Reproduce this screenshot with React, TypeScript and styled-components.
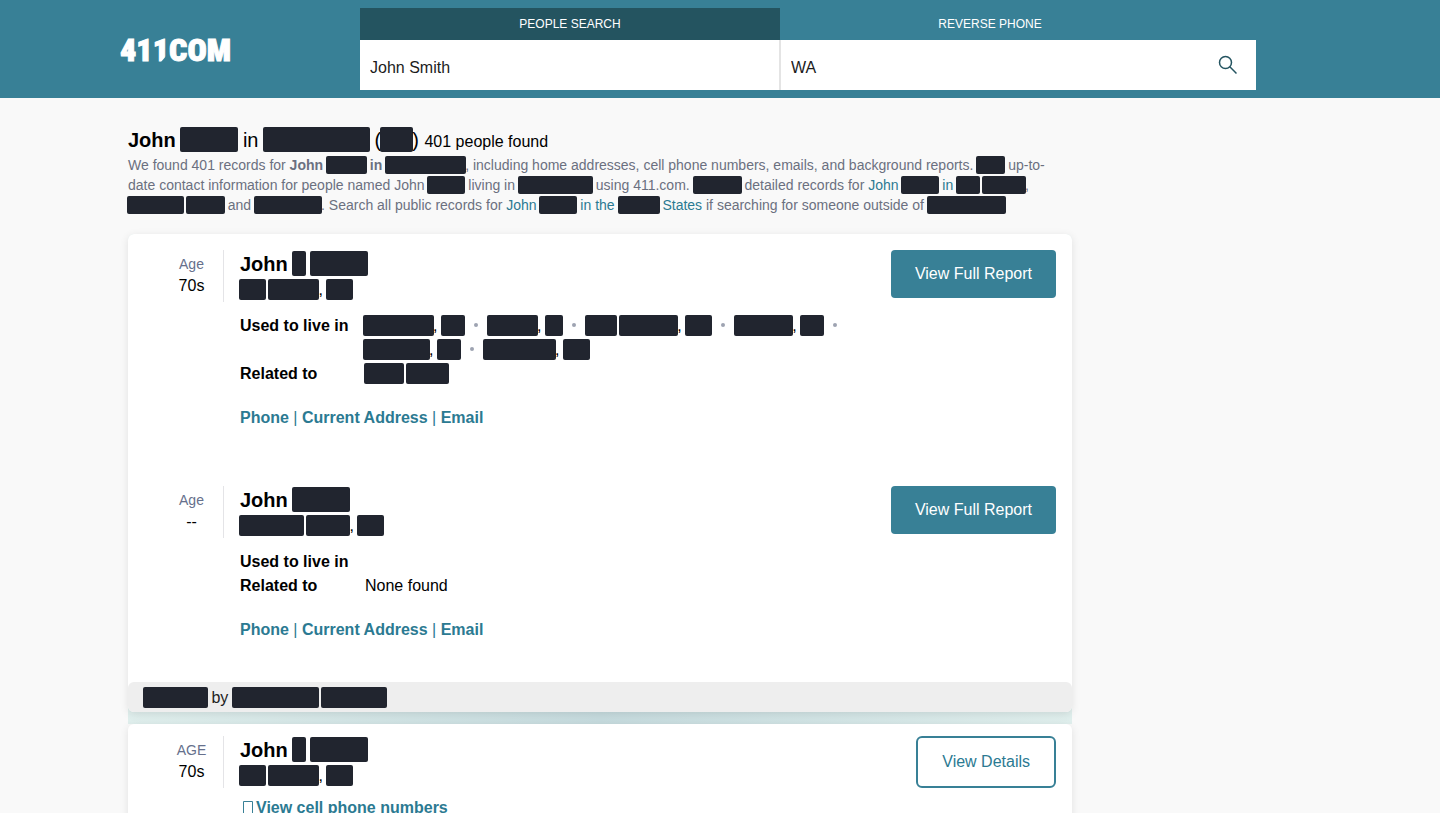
import React from "react";
import styled, { createGlobalStyle } from "styled-components";

const teal = "#388096";
const tealDark = "#245460";
const tealText = "#2b7a92";
const ink = "#21252f";

const GlobalStyle = createGlobalStyle`
  *, *::before, *::after { box-sizing: border-box; }
  body {
    margin: 0;
    background: #f9f9f9;
    color: #000;
    font-family: "Liberation Sans", Helvetica, Arial, sans-serif;
    font-size: 16px;
    line-height: 24px;
  }
  h1, h2, p, dl, dd { margin: 0; }
  button, input { font: inherit; }
`;

const Header = styled.header`
  background: ${teal};
  padding: 8px 24px;
`;

const HeaderInner = styled.div`
  display: flex;
  max-width: 1200px;
  margin: 0 auto;
`;

const LogoLink = styled.a`
  display: flex;
  align-items: center;
  flex: 0 0 240px;
  color: #fff;
  text-decoration: none;
`;

const Search = styled.div`
  flex: 0 1 896px;
  min-width: 0;
`;

const Tabs = styled.nav`
  display: flex;
  padding-right: 56px;
`;

const Tab = styled.button<{ $active?: boolean }>`
  flex: 1;
  height: 32px;
  padding: 0;
  border: 0;
  background: ${(p) => (p.$active ? tealDark : "transparent")};
  color: #fff;
  font-size: 12px;
  text-transform: uppercase;
`;

const SearchForm = styled.form`
  display: flex;
  height: 50px;
  background: #fff;
`;

const Field = styled.input<{ $divided?: boolean }>`
  flex: 1;
  min-width: 0;
  padding: 6px 10px 0;
  border: 0;
  border-left: ${(p) => (p.$divided ? "2px solid #e4e4e4" : "0")};
  border-radius: 0;
  outline: 0;
  background: transparent;
  color: #1c1c1c;
`;

const SearchButton = styled.button`
  flex: 0 0 56px;
  padding: 0;
  border: 0;
  background: transparent;
  line-height: 0;
`;

const Main = styled.main`
  max-width: 1200px;
  margin: 0 auto;
  padding: 29px 8px 0;
`;

const Column = styled.div`
  max-width: 944px;
`;

const Title = styled.h1`
  font-size: 20px;
  line-height: 27px;
  font-weight: 400;

  small {
    font-size: 16px;
  }
`;

const Summary = styled.p`
  max-width: 928px;
  margin-bottom: 19px;
  color: #6b7080;
  font-size: 14px;
  line-height: 20px;

  a {
    color: ${tealText};
    text-decoration: none;
  }
`;

const barSizes = {
  small: { height: 18, drop: 4 },
  medium: { height: 21, drop: 5 },
  large: { height: 25, drop: 5 },
};

const Bar = styled.span<{ $w: number; $size?: keyof typeof barSizes }>`
  display: inline-block;
  width: ${(p) => p.$w}px;
  height: ${(p) => barSizes[p.$size ?? "medium"].height}px;
  margin: 0 -1px;
  border-radius: 2px;
  background: ${ink};
  vertical-align: -${(p) => barSizes[p.$size ?? "medium"].drop}px;
`;

const Featured = styled.div`
  background: linear-gradient(90deg, #e0efed, #c6dbde 50%, #e0efed);
  padding-bottom: 12px;
  border-radius: 6px 6px 0 0;
`;

const Card = styled.section`
  border-radius: 6px;
  background: #fff;
  box-shadow: 0 2px 8px rgba(0, 0, 0, 0.1);
`;

const Person = styled.article<{ $compact?: boolean }>`
  display: grid;
  grid-template-columns: 80px minmax(0, 1fr) auto;
  align-items: start;
  padding: ${(p) => (p.$compact ? "12px 16px 16px" : "16px 16px 40px")};
`;

const Age = styled.div`
  height: 52px;
  padding: 4px 0 0 16px;
  border-right: 1px solid #e4e4e7;
  text-align: center;

  small {
    display: block;
    color: #66708c;
    font-size: 14px;
    line-height: 20px;
  }
`;

const Details = styled.div`
  padding: 0 16px;
`;

const Name = styled.h2`
  font-size: 20px;
  line-height: 28px;
`;

const Facts = styled.dl`
  display: grid;
  grid-template-columns: 124px minmax(0, 1fr);
  margin: 12px 0 20px;

  dt {
    font-weight: 700;
  }
`;

const Related = styled.dd`
  padding-left: 1px;
`;

const Place = styled.span`
  display: inline-block;
  white-space: nowrap;
`;

const Dot = styled.i`
  display: inline-block;
  width: 4px;
  height: 4px;
  margin: 0 10px;
  border-radius: 50%;
  background: #9ea3b1;
  vertical-align: 4px;
`;

const Links = styled.p`
  color: ${tealText};

  a {
    color: inherit;
    font-weight: 700;
    text-decoration: none;
  }
`;

const CellLink = styled.p`
  margin-top: 8px;

  a {
    color: ${tealText};
    font-weight: 700;
    text-decoration: none;
  }

  svg {
    margin: 0 3px;
    vertical-align: -2px;
  }
`;

const Action = styled.button<{ $outline?: boolean }>`
  height: ${(p) => (p.$outline ? 52 : 48)}px;
  padding: 0 24px;
  border: ${(p) => (p.$outline ? `2px solid ${teal}` : "0")};
  border-radius: ${(p) => (p.$outline ? 6 : 4)}px;
  background: ${(p) => (p.$outline ? "#fff" : teal)};
  color: ${(p) => (p.$outline ? tealText : "#fff")};
  white-space: nowrap;
`;

const Sponsor = styled.footer`
  padding: 4px 16px 2px;
  border-radius: 6px;
  background: #eee;
  color: #222;
`;

function Logo() {
  return (
    <svg width="120" height="40" viewBox="0 0 120 40" role="img" aria-label="411.com">
      <text
        x="0"
        y="32"
        fill="#fff"
        stroke="#fff"
        strokeWidth="1"
        fontFamily="'Roboto Condensed', Roboto, 'Liberation Sans', sans-serif"
        fontWeight="900"
        fontSize="32"
      >
        411COM
      </text>
      {/* notch that makes the last 1 and the C read as a speech bubble */}
      <path fill={teal} d="M41 33l6-7v7z" />
    </svg>
  );
}

function SearchIcon() {
  return (
    <svg width="20" height="20" viewBox="0 0 20 20" fill="none" stroke={tealDark} strokeWidth="1.5">
      <circle cx="7.5" cy="7.5" r="6" />
      <path d="M11.8 11.8 18.5 18.5" />
    </svg>
  );
}

const formerPlaces = [
  [[71], 24],
  [[51], 18],
  [[32, 59], 27],
  [[59], 24],
  [[67], 24],
  [[73], 27],
] as [number[], number][];

function Bars({ widths, size }: { widths: number[]; size?: keyof typeof barSizes }) {
  return (
    <>
      {widths.map((w, i) => (
        <React.Fragment key={i}>
          {i > 0 && " "}
          <Bar $w={w} $size={size} />
        </React.Fragment>
      ))}
    </>
  );
}

function PlaceBars({ city, state }: { city: number[]; state: number }) {
  return (
    <Place>
      <Bars widths={city} />, <Bar $w={state} />
    </Place>
  );
}

function PersonHead({ name, city, state }: { name: number[]; city: number[]; state: number }) {
  return (
    <>
      <Name>
        John <Bars widths={name} size="large" />
      </Name>
      <p>
        <PlaceBars city={city} state={state} />
      </p>
    </>
  );
}

function DataLinks() {
  return (
    <Links>
      <a href="#phone">Phone</a> | <a href="#address">Current Address</a> | <a href="#email">Email</a>
    </Links>
  );
}

export default function App() {
  return (
    <>
      <GlobalStyle />
      <Header>
        <HeaderInner>
          <LogoLink href="#home">
            <Logo />
          </LogoLink>
          <Search>
            <Tabs>
              <Tab type="button" $active>People Search</Tab>
              <Tab type="button">Reverse Phone</Tab>
            </Tabs>
            <SearchForm onSubmit={(e) => e.preventDefault()}>
              <Field aria-label="Name" defaultValue="John Smith" />
              <Field aria-label="City or state" defaultValue="WA" $divided />
              <SearchButton type="submit" aria-label="Search">
                <SearchIcon />
              </SearchButton>
            </SearchForm>
          </Search>
        </HeaderInner>
      </Header>
      <Main>
        <Column>
          <Title>
            <b>John</b> <Bar $w={58} $size="large" /> in <Bar $w={107} $size="large" /> (
            <Bar $w={33} $size="large" />) <small>401 people found</small>
          </Title>
          <Summary>
            We found 401 records for <b>John <Bar $w={41} $size="small" /> in <Bar $w={81} $size="small" /></b>,
            including home addresses, cell phone numbers, emails, and background reports.{" "}
            <Bar $w={29} $size="small" /> up-to-date contact information for people named John{" "}
            <Bar $w={38} $size="small" /> living in <Bar $w={75} $size="small" /> using 411.com.{" "}
            <Bar $w={49} $size="small" /> detailed records for{" "}
            <a href="#state">John <Bar $w={38} $size="small" /> in <Bars widths={[24, 44]} size="small" /></a>,{" "}
            <Bars widths={[57, 39]} size="small" /> and <Bar $w={68} $size="small" />. Search all public records for{" "}
            <a href="#country">John <Bar $w={38} $size="small" /> in the <Bar $w={42} $size="small" /> States</a> if
            searching for someone outside of <Bar $w={79} $size="small" />
          </Summary>

          <Featured>
            <Card>
              <Person>
                <Age><small>Age</small>70s</Age>
                <Details>
                  <PersonHead name={[14, 58]} city={[27, 51]} state={27} />
                  <Facts>
                    <dt>Used to live in</dt>
                    <dd>
                      {formerPlaces.map(([city, state], i) => (
                        <React.Fragment key={i}>
                          <PlaceBars city={city} state={state} />
                          {i < formerPlaces.length - 1 && <Dot />}
                        </React.Fragment>
                      ))}
                    </dd>
                    <dt>Related to</dt>
                    <Related><Bars widths={[40, 43]} /></Related>
                  </Facts>
                  <DataLinks />
                </Details>
                <Action type="button">View Full Report</Action>
              </Person>
              <Person>
                <Age><small>Age</small>--</Age>
                <Details>
                  <PersonHead name={[58]} city={[65, 44]} state={27} />
                  <Facts>
                    <dt>Used to live in</dt>
                    <dd />
                    <dt>Related to</dt>
                    <Related>None found</Related>
                  </Facts>
                  <DataLinks />
                </Details>
                <Action type="button">View Full Report</Action>
              </Person>
              <Sponsor>
                <Bar $w={65} /> by <Bars widths={[87, 66]} />
              </Sponsor>
            </Card>
          </Featured>

          <Card>
            <Person $compact>
              <Age><small>AGE</small>70s</Age>
              <Details>
                <PersonHead name={[14, 58]} city={[27, 51]} state={27} />
                <CellLink>
                  <a href="#cell">
                    <svg width="10" height="14" viewBox="0 0 10 14" fill="none" stroke={teal}>
                      <path d="M.5.5h9v13h-9z" />
                    </svg>
                    View cell phone numbers
                  </a>
                </CellLink>
              </Details>
              <Action type="button" $outline>View Details</Action>
            </Person>
          </Card>
        </Column>
      </Main>
    </>
  );
}
